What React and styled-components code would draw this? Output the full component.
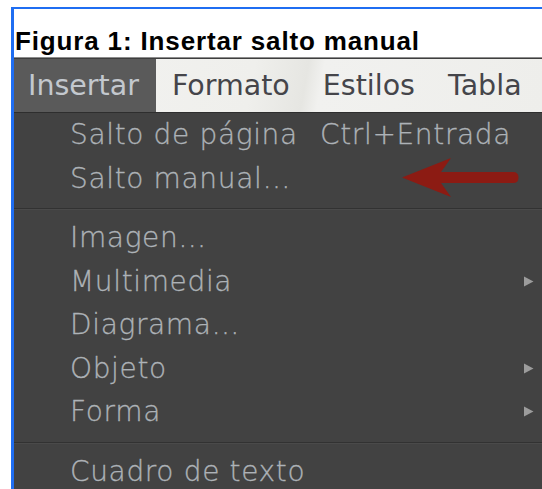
import styled, { createGlobalStyle } from "styled-components";

const GlobalStyle = createGlobalStyle`
  html, body {
    margin: 0;
    padding: 0;
    background: #ffffff;
    overflow: hidden;
  }
`;

const MENUBAR = ["Insertar", "Formato", "Estilos", "Tabla"];

const ITEMS = [
  { label: "Salto de página", shortcut: "Ctrl+Entrada" },
  { label: "Salto manual…", marked: true },
  { separator: true },
  { label: "Imagen…" },
  { label: "Multimedia", submenu: true },
  { label: "Diagrama…" },
  { label: "Objeto", submenu: true },
  { label: "Forma", submenu: true },
  { separator: true },
  { label: "Cuadro de texto" },
];

export default function App() {
  return (
    <>
      <GlobalStyle />
      <Frame>
        <Caption>Figura 1: Insertar salto manual</Caption>
        <MenuBar>
          {MENUBAR.map((name, i) => (
            <BarItem key={name} $active={i === 0}>
              {name}
            </BarItem>
          ))}
        </MenuBar>
        <Menu>
          {ITEMS.map((item, i) =>
            item.separator ? (
              <Separator key={i} />
            ) : (
              <Item key={i}>
                <Label>{item.label}</Label>
                <Shortcut>{item.shortcut}</Shortcut>
                <Arrow>{item.submenu && <SubmenuMark />}</Arrow>
                {item.marked && <Pointer />}
              </Item>
            )
          )}
        </Menu>
      </Frame>
    </>
  );
}

function SubmenuMark() {
  return (
    <svg width="11" height="11" viewBox="0 0 11 11">
      <path d="M1 0.5 L10.5 5.5 L1 10.5 Z" fill="#9c9c9c" />
    </svg>
  );
}

// red annotation arrow pointing at the item
function Pointer() {
  return (
    <PointerSvg width="120" height="46" viewBox="0 0 120 46">
      <path
        d="M2 21.5 L51 2 L41 16 L113 16 Q118.5 16 118.5 21.5 Q118.5 27 113 27 L41 27 L51 41 Z"
        fill="#8c1b13"
      />
    </PointerSvg>
  );
}

const Frame = styled.div`
  margin: 7px 0 0 11px;
  border-top: 2px solid #1f6ef2;
  border-left: 3px solid #1f6ef2;
  height: 480px;
  display: flex;
  flex-direction: column;
  overflow: hidden;
`;

const Caption = styled.div`
  height: 48px;
  flex: none;
  display: flex;
  align-items: flex-end;
  padding: 0 0 3px 1px;
  box-sizing: border-box;
  font-family: "Liberation Sans", Arial, sans-serif;
  font-weight: 700;
  font-size: 26px;
  line-height: 1;
  letter-spacing: 0.85px;
  color: #000000;
`;

const MenuBar = styled.div`
  display: flex;
  flex: none;
  height: 56px;
  box-sizing: border-box;
  border-top: 1px solid #8c8c8c;
  border-bottom: 1px solid #2e2e2e;
  box-shadow: inset 0 1px 0 #3e3e3e;
  background: linear-gradient(
    100deg,
    #f3f3f1 0%,
    #efefec 45%,
    #e6e6e2 55%,
    #f1f1ef 58%,
    #eeeeeb 100%
  );
  font-family: "DejaVu Sans", sans-serif;
  font-size: 28.5px;
  font-weight: 400;
`;

const BarItem = styled.div`
  display: flex;
  align-items: center;
  padding: 0 17px 0 16px;
  margin-top: 1px;
  color: ${(p) => (p.$active ? "#c3c8ce" : "#45454a")};
  background: ${(p) => (p.$active ? "#5a5a5a" : "transparent")};

  &:first-child {
    padding-left: 14px;
  }
`;

const Menu = styled.div`
  flex: 1;
  background: #424242;
  font-family: "DejaVu Sans", sans-serif;
  font-size: 28px;
  font-weight: 200;
  letter-spacing: 0.65px;
  color: #adb2b7;
  -webkit-text-stroke: 0.3px #adb2b7;
`;

const Item = styled.div`
  position: relative;
  display: grid;
  grid-template-columns: 250px 1fr 24px;
  align-items: center;
  height: 43.5px;
  line-height: 43.5px;
  padding: 0 8px 0 56px;
  white-space: nowrap;
`;

const Label = styled.span``;

const Shortcut = styled.span``;

const Arrow = styled.span`
  display: flex;
  align-items: center;
  justify-content: flex-end;
`;

const Separator = styled.div`
  height: 1px;
  margin: 8px 0 7px;
  background: #323232;
  box-shadow: 0 1px 0 #4a4a4a;
`;

const PointerSvg = styled.svg`
  position: absolute;
  left: 386px;
  top: -1px;
  filter: blur(0.6px);
`;
